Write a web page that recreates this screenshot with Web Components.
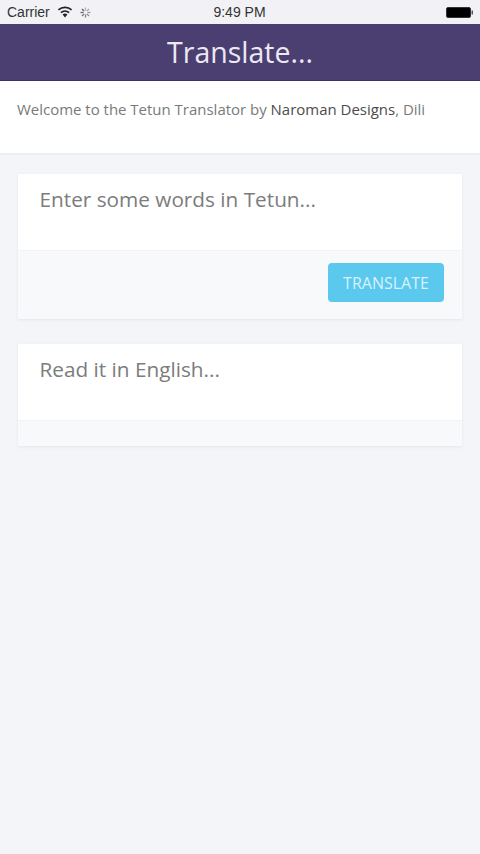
<!DOCTYPE html>
<html>
<head>
<meta charset="utf-8">
<title>Translate</title>
<style>
  html, body { margin: 0; height: 100%; }
  body { background: #f3f5f9; font-family: "Open Sans", sans-serif; }
  #app { display: flex; flex-direction: column; height: 854px; overflow: hidden; }
</style>
</head>
<body>
<div id="app">
  <status-bar carrier="Carrier" time="9:49 PM"></status-bar>
  <title-bar>Translate...</title-bar>
  <intro-panel>Welcome to the Tetun Translator by <b>Naroman Designs</b>, Dili</intro-panel>
  <div style="height:19px"></div>
  <text-card placeholder="Enter some words in Tetun..." style="margin-bottom:25px">
    <action-button>TRANSLATE</action-button>
  </text-card>
  <text-card placeholder="Read it in English..."></text-card>
</div>

<script>
class StatusBar extends HTMLElement {
  constructor() {
    super();
    this.attachShadow({mode: 'open'});
    // spinner spokes are generated, 8 is enough at this size
    let spokes = '';
    for (let i = 0; i < 8; i++) {
      spokes += `<line x1="5.5" y1="0.5" x2="5.5" y2="3.6" stroke="#555" stroke-opacity="${0.4 + i * 0.08}" stroke-width="1.3" transform="rotate(${i * 45} 5.5 5.5)"/>`;
    }
    this.shadowRoot.innerHTML = `
      <style>
        :host { display: grid; grid-template-columns: 1fr auto 1fr; align-items: center; height: 24px; box-sizing: border-box;
                padding: 0 6px 0 7px; background: #f2f2f6; color: #333; font: 14px "Liberation Sans", Arial, sans-serif; }
        .left { display: flex; align-items: center; gap: 7px; }
        .time { font-size: 14px; margin-left: -2px; }
        .right { display: flex; justify-content: flex-end; }
        svg { display: block; }
      </style>
      <div class="left">
        <span>${this.getAttribute('carrier')}</span>
        <svg width="16" height="12" viewBox="0 0 16 12">
          <path d="M8 11.5 5.6 8.6a3.6 3.6 0 0 1 4.8 0z" fill="#222"/>
          <path d="M3.9 6.6a6.2 6.2 0 0 1 8.2 0" fill="none" stroke="#222" stroke-width="1.7"/>
          <path d="M1.4 3.8a10 10 0 0 1 13.2 0" fill="none" stroke="#222" stroke-width="1.7"/>
        </svg>
        <svg width="11" height="11" viewBox="0 0 11 11">${spokes}</svg>
      </div>
      <span class="time">${this.getAttribute('time')}</span>
      <div class="right">
        <svg width="28" height="11" viewBox="0 0 28 11">
          <rect x="0.5" y="0.5" width="24" height="10" rx="1.5" fill="#000" stroke="#333"/>
          <rect x="25.5" y="3.5" width="1.5" height="4" fill="#555"/>
        </svg>
      </div>`;
  }
}

class TitleBar extends HTMLElement {
  constructor() {
    super();
    this.attachShadow({mode: 'open'});
    this.shadowRoot.innerHTML = `
      <style>
        :host { display: flex; align-items: center; justify-content: center; box-sizing: border-box; height: 57px; background: #4b3f72;
                color: #ece9f2; font-size: 28.5px; border-bottom: 1px solid #3d3360; }
      </style>
      <slot></slot>`;
  }
}

class IntroPanel extends HTMLElement {
  constructor() {
    super();
    this.attachShadow({mode: 'open'});
    this.shadowRoot.innerHTML = `
      <style>
        :host { display: block; box-sizing: border-box; height: 74px; padding: 18px 17px 0; background: #fff;
                border-bottom: 2px solid #eceef3; color: #7a7a7a; font-size: 14.97px; line-height: 20px; white-space: nowrap; }
        ::slotted(b) { font-weight: 400; color: #4c4c4c; }
      </style>
      <slot></slot>`;
  }
}

class TextCard extends HTMLElement {
  constructor() {
    super();
    this.attachShadow({mode: 'open'});
    this.shadowRoot.innerHTML = `
      <style>
        :host { display: block; margin: 0 18px; background: #fff; box-shadow: 0 1px 3px rgba(60,70,100,.09); }
        .text { box-sizing: border-box; height: 77px; padding: 10px 22px 0 21.5px; color: #7c7c7c; font-size: 20.75px; line-height: 30px;
                border-bottom: 1px solid #f1f3f7; }
        .foot { display: flex; justify-content: flex-end; min-height: 25px; background: #f8f9fb; }
      </style>
      <div class="text">${this.getAttribute('placeholder')}</div>
      <div class="foot"><slot></slot></div>`;
  }
}

class ActionButton extends HTMLElement {
  constructor() {
    super();
    this.attachShadow({mode: 'open'});
    this.shadowRoot.innerHTML = `
      <style>
        :host { display: flex; align-items: center; justify-content: center; width: 116px; height: 39px; margin: 12px 18px 17px 0;
                background: #5bc8ee; border-radius: 4px; color: #d8f3fc; font-size: 16px; }
      </style>
      <slot></slot>`;
  }
}

customElements.define('status-bar', StatusBar);
customElements.define('title-bar', TitleBar);
customElements.define('intro-panel', IntroPanel);
customElements.define('text-card', TextCard);
customElements.define('action-button', ActionButton);
</script>
</body>
</html>
